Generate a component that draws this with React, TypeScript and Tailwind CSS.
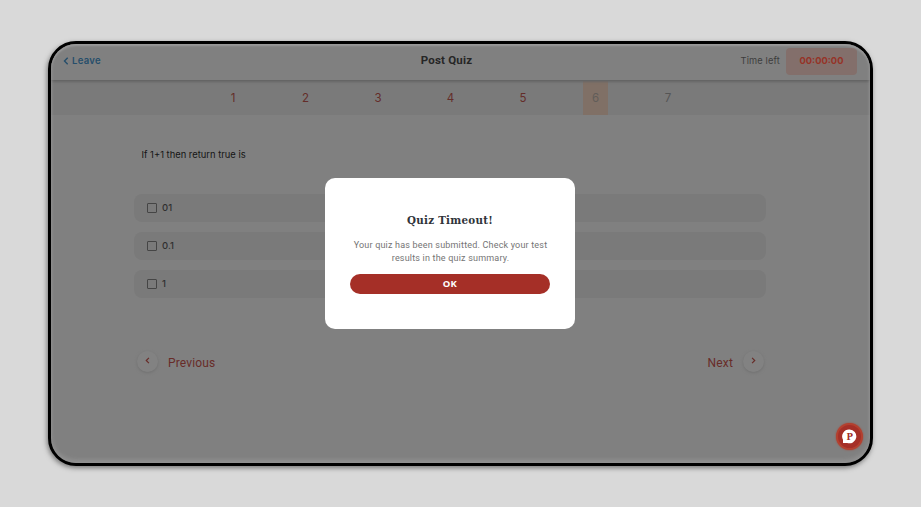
const questions = [1, 2, 3, 4, 5, 6, 7];
const options = ["01", "0.1", "1"];

function Chevron({ direction, className }: { direction: "left" | "right"; className: string }) {
  return (
    <svg viewBox="0 0 6 8" className={className} fill="none" stroke="currentColor" strokeWidth="1.4">
      <path d={direction === "left" ? "M4.7 0.8 1.5 4l3.2 3.2" : "M1.3 0.8 4.5 4 1.3 7.2"} />
    </svg>
  );
}

function Header() {
  return (
    <header className="relative z-10 grid h-[37px] shrink-0 grid-cols-3 border-b border-[#656565] bg-[#808080] shadow-[0_1px_2px_#656565]">
      <div className="flex h-[33px] items-center pl-[12px] text-[#264e6b]">
        <Chevron direction="left" className="mr-[3px] h-[8px] w-[6px]" />
        <span className="pt-px font-['Inter'] text-[9.5px] font-semibold tracking-[0.3px]">Leave</span>
      </div>
      <h1 className="flex h-[33px] items-center justify-center pr-[28px] font-['Roboto'] text-[11.5px] font-bold tracking-[0.2px] text-[#262626]">
        Post Quiz
      </h1>
      <div className="flex h-[33px] items-center justify-end pr-[13px]">
        <span className="mr-[6px] font-['Inter'] text-[9.25px] tracking-[0.15px] text-[#3d3d3d]">Time left</span>
        <span className="mt-px flex h-[27px] w-[71px] items-center justify-center rounded-[4px] bg-[#836f6b] font-['Inter'] text-[9.3px] font-bold text-[#963327]">
          00:00:00
        </span>
      </div>
    </header>
  );
}

function QuestionNav() {
  return (
    <nav className="flex h-[34px] shrink-0 justify-center bg-[#7a7a7a] pr-[20px]">
      {questions.map((n) => (
        <div key={n} className="flex w-[72.5px] justify-center">
          <span
            className={`flex w-[25px] items-center justify-center pt-[2px] font-['Inter'] text-[11.5px] ${
              n === 6 ? "bg-[#807066] text-[#625d59]" : n === 7 ? "text-[#555555]" : "text-[#642d29]"
            }`}
          >
            {n}
          </span>
        </div>
      ))}
    </nav>
  );
}

function RoundArrow({ direction }: { direction: "left" | "right" }) {
  return (
    <span className="flex size-[21px] items-center justify-center rounded-full bg-[#828282] pb-px shadow-[0_1px_3px_#707070]">
      <Chevron direction={direction} className="h-[7px] w-[5px]" />
    </span>
  );
}

function Dialog() {
  return (
    <section className="absolute left-[274px] top-[134px] flex h-[151px] w-[250px] flex-col items-center rounded-[10px] bg-white">
      <h2 className="mt-[34px] whitespace-nowrap font-['DejaVu_Serif_Condensed','DejaVu_Serif',serif] text-[11.5px] font-bold leading-[17px] tracking-[0.25px] text-[#30343a]">
        Quiz Timeout!
      </h2>
      <p className="mt-[10px] whitespace-nowrap pl-px text-center font-['Roboto'] text-[9px] leading-[12.5px] tracking-[0.19px] text-[#747474]">
        Your quiz has been submitted. Check your test
        <br />
        results in the quiz summary.
      </p>
      <button className="mt-[10px] flex h-[20px] w-[200px] items-center justify-center rounded-full bg-[#a52f27] font-['Open_Sans'] text-[9.5px] font-bold tracking-[0.3px] text-white">
        OK
      </button>
    </section>
  );
}

function HelpBadge() {
  return (
    <div className="absolute bottom-[13px] right-[7px] flex size-[27px] items-center justify-center rounded-full border-2 border-[#b3402f] bg-[#a52f27] shadow-[0_0_2px_#a84335]">
      <svg viewBox="0 0 15 15" className="size-[15px]">
        <path fill="#ffffff" d="M7.6 0.5a6.9 6.9 0 1 1-2.5 13.4H1v-3.2A6.9 6.9 0 0 1 7.6 0.5Z" />
        <text
          x="7.7"
          y="10.8"
          textAnchor="middle"
          className="fill-[#a52f27] font-['DejaVu_Serif_Condensed','DejaVu_Serif',serif] text-[9.5px] font-bold"
        >
          P
        </text>
      </svg>
    </div>
  );
}

export default function App() {
  return (
    <div className="h-[507px] w-[921px] overflow-hidden bg-[#d9d9d9] pl-[48px] pt-[41px]">
      <div className="relative flex h-[425px] w-[825px] flex-col overflow-hidden rounded-[28px] border-[3px] border-black bg-[#808080] shadow-[-1px_2px_5px_#777777]">
        <Header />
        <QuestionNav />
        <main className="flex flex-col pl-[83px] pr-[104px]">
          <p className="mt-[34px] pl-[7.5px] font-['Inter'] text-[9.4px] leading-[12px] text-[#151515]">
            If 1+1 then return true is
          </p>
          <ul className="mt-[33px] flex flex-col gap-[9.75px]">
            {options.map((option) => (
              <li key={option} className="flex h-[28px] items-center rounded-[8px] bg-[#7a7a7a] pl-[13px]">
                <span className="mr-[5px] size-[10px] rounded-[1px] border border-[#454545]" />
                <span className="pt-px font-['Inter'] text-[9.5px] font-medium text-[#303030]">{option}</span>
              </li>
            ))}
          </ul>
          <div className="mt-[53px] flex items-center justify-between font-['Roboto'] text-[12px] tracking-[0.15px] text-[#682c28]">
            <div className="flex items-center gap-[10px] pl-[3px]">
              <RoundArrow direction="left" />
              <span className="pt-[3px]">Previous</span>
            </div>
            <div className="flex items-center gap-[10px] pr-[2px]">
              <span className="pt-[3px]">Next</span>
              <RoundArrow direction="right" />
            </div>
          </div>
        </main>
        <Dialog />
        <HelpBadge />
        <div className="pointer-events-none absolute inset-0 z-20 rounded-[25px] shadow-[inset_0_2px_2px_#999999,inset_0_-3px_4px_#929292]" />
      </div>
    </div>
  );
}
